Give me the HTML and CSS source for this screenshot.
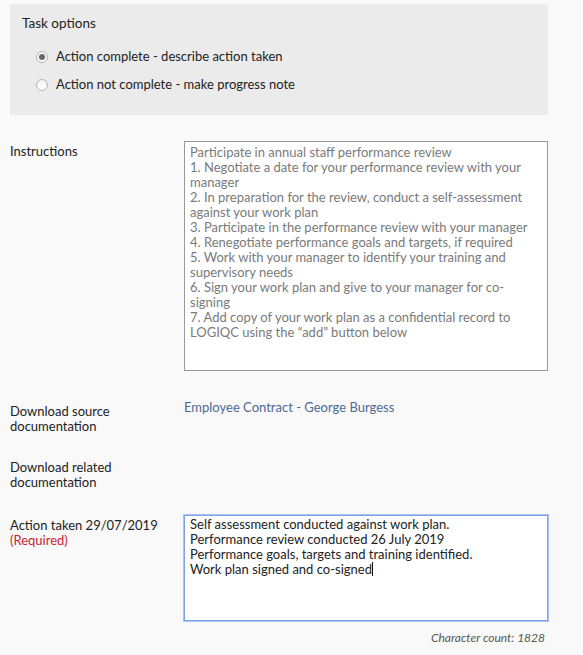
FILE: index.html
```html
<!DOCTYPE html>
<html>
<head>
<meta charset="utf-8">
<link rel="stylesheet" href="styles.css">
</head>
<body>
<div class="page">
  <section class="options">
    <div class="options-title">Task options</div>
    <label class="radio-row"><span class="radio checked"></span><span>Action complete - describe action taken</span></label>
    <label class="radio-row"><span class="radio"></span><span>Action not complete - make progress note</span></label>
  </section>

  <div class="row row-instructions">
    <div class="label">Instructions</div>
    <div class="box box-readonly">Participate in annual staff performance review
1. Negotiate a date for your performance review with your manager
2. In preparation for the review, conduct a self-assessment against your work plan
3. Participate in the performance review with your manager
4. Renegotiate performance goals and targets, if required
5. Work with your manager to identify your training and supervisory needs
6. Sign your work plan and give to your manager for co-signing
7. Add copy of your work plan as a confidential record to LOGIQC using the “add” button below</div>
  </div>

  <div class="row row-source">
    <div class="label">Download source documentation</div>
    <div class="value"><a class="doc-link" href="#">Employee Contract - George Burgess</a></div>
  </div>

  <div class="row row-related">
    <div class="label">Download related documentation</div>
    <div class="value"></div>
  </div>

  <div class="row row-action">
    <div class="label">Action taken 29/07/2019<br><span class="required">(Required)</span></div>
    <div class="value">
      <div class="box box-focus">Self assessment conducted against work plan.
Performance review conducted 26 July 2019
Performance goals, targets and training identified.
Work plan signed and co-signed<span class="caret"></span></div>
      <div class="count">Character count: 1828</div>
    </div>
  </div>
</div>
</body>
</html>
```

FILE: styles.css
```css
* { box-sizing: border-box; }
html, body { margin: 0; padding: 0; }
body {
  background: #f9f9f9;
  font-family: Lato, "Open Sans", sans-serif;
  font-size: 13px;
  line-height: 15px;
  color: #222;
}
.page {
  width: 548px;
  padding: 4px 0 0 10px;
}
.options {
  background: #ebebeb;
  height: 111px;
  padding: 11px 12px 0 12px;
}
.options-title {
  font-size: 13.5px;
  line-height: 17px;
  margin-bottom: 16px;
}
.radio-row {
  display: flex;
  align-items: center;
  gap: 8px;
  padding-left: 14px;
  height: 17px;
  margin-bottom: 11px;
}
.radio {
  width: 12px;
  height: 12px;
  border-radius: 50%;
  border: 1px solid #b5b5b5;
  background: linear-gradient(#f4f4f4, #fdfdfd);
  display: inline-flex;
  align-items: center;
  justify-content: center;
}
.radio.checked::after {
  content: "";
  width: 6px;
  height: 6px;
  border-radius: 50%;
  background: #6a6a6a;
}
.row {
  display: grid;
  grid-template-columns: 174px 1fr;
}
.label { padding-top: 3px; color: #222; }
.row-instructions { margin-top: 26px; }
.box {
  white-space: pre-line;
  background: #fff;
  padding: 3px 5px;
}
.box-readonly {
  height: 230px;
  border: 1px solid #9a9a9a;
  color: #7a7a7a;
}
.row-source { margin-top: 26px; height: 57px; }
.row-source .label { padding-top: 7px; }
.row-source .value { padding-top: 3px; }
.row-related { height: 61px; }
.row-related .label { padding-top: 6px; }
.row-action .label { padding-top: 3px; }
.doc-link {
  color: #4d6a94;
  text-decoration: none;
}
.required { color: #cc2233; }
.box-focus {
  height: 106px;
  border: 1px solid #7da2e8;
  box-shadow: 0 0 0 1px #a9c4f2;
  color: #222;
  padding-top: 1px;
}
.caret {
  display: inline-block;
  width: 1px;
  height: 14px;
  background: #111;
  vertical-align: -2px;
}
.count {
  text-align: right;
  padding-right: 3px;
  margin-top: 9px;
  font-style: italic;
  font-size: 12px;
  color: #555;
}
```
